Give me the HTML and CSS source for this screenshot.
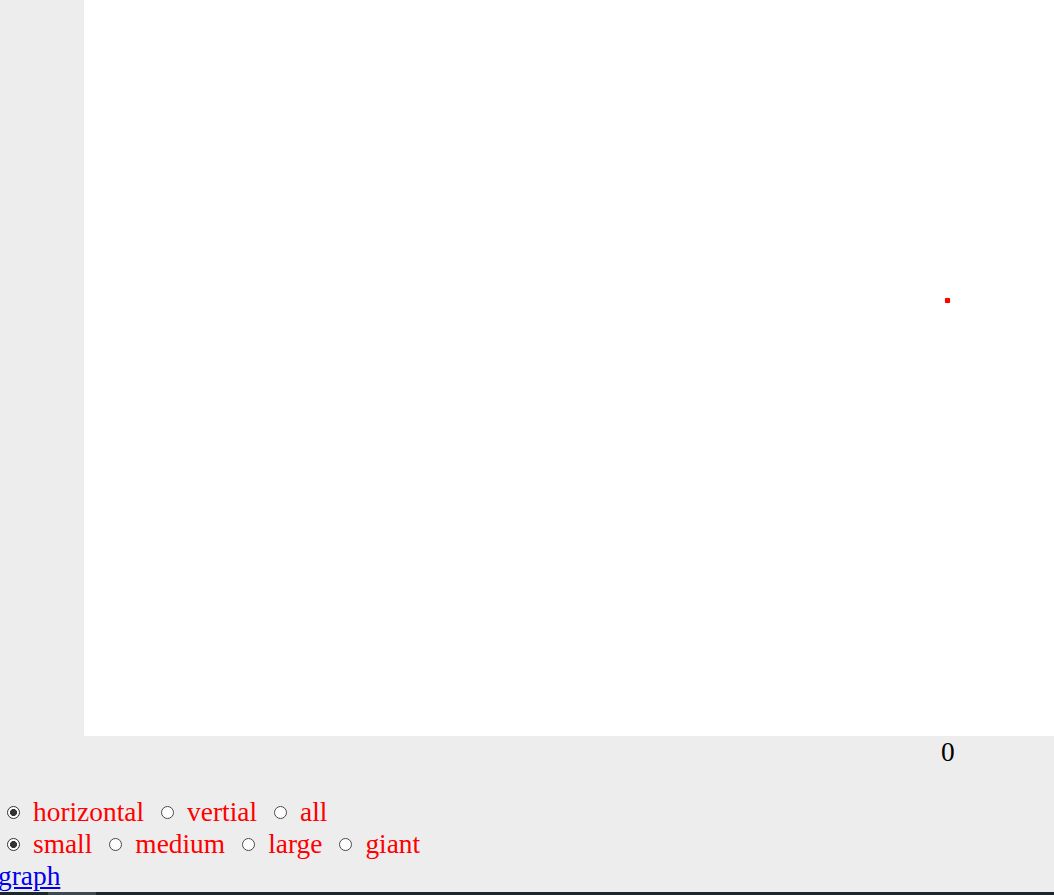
FILE: index.html
```html
<!DOCTYPE html>
<html>
<head>
<meta charset="utf-8">
<link rel="stylesheet" href="styles.css">
</head>
<body>
<div class="stage">
  <div class="gutter"></div>
  <div class="plot">
    <span class="point"></span>
  </div>
</div>
<div class="axis"><span class="tick">0</span></div>
<form class="controls">
  <div class="row">
    <input type="radio" name="dir" checked><span class="lbl">horizontal</span>
    <input type="radio" name="dir"><span class="lbl">vertial</span>
    <input type="radio" name="dir"><span class="lbl">all</span>
  </div>
  <div class="row">
    <input type="radio" name="size" checked><span class="lbl">small</span>
    <input type="radio" name="size"><span class="lbl">medium</span>
    <input type="radio" name="size"><span class="lbl">large</span>
    <input type="radio" name="size"><span class="lbl">giant</span>
  </div>
</form>
<div class="links"><a href="#">graph</a></div>
<div class="footer"><span class="thumb"></span></div>
</body>
</html>
```
FILE: styles.css
```css
html, body {
  margin: 0;
  padding: 0;
  background: #ededed;
  font-family: "Liberation Serif", "Times New Roman", serif;
  font-size: 27.4px;
  overflow: hidden;
}
.stage {
  display: grid;
  grid-template-columns: 84px 1fr;
  height: 736px;
}
.gutter {
  background: #ededed;
}
.plot {
  background: #ffffff;
  position: relative;
}
.point {
  position: absolute;
  left: 861px;
  top: 298px;
  width: 5px;
  height: 5px;
  border-radius: 1px;
  background: #ff0000;
  box-shadow: 0 0 1px #ff6666;
}
.axis {
  height: 32px;
  line-height: 32px;
  padding-left: 941px;
  color: #000;
}
.controls {
  margin: 28px 0 0 0;
}
.row {
  display: flex;
  align-items: center;
  height: 32px;
  line-height: 32px;
}
.row input {
  -webkit-appearance: none;
  appearance: none;
  box-sizing: border-box;
  margin: 0 13px 0 17px;
  width: 13px;
  height: 13px;
  border: 1px solid #4a4a4a;
  border-radius: 50%;
  background: #ffffff;
}
.row input:checked {
  border-color: #333333;
  background: radial-gradient(circle, #333333 0, #333333 3.2px, #ffffff 3.8px);
}
.row input:first-child {
  margin-left: 7px;
}
.lbl {
  color: #ff0000;
}
.links {
  height: 32px;
  line-height: 32px;
  text-indent: -2px;
}
.links a {
  color: #0000ee;
  text-decoration: underline;
}
.footer {
  display: flex;
  height: 12px;
  background: #1b262d;
}
.thumb {
  margin-left: 48px;
  width: 48px;
  background: #3f4a50;
}
```
